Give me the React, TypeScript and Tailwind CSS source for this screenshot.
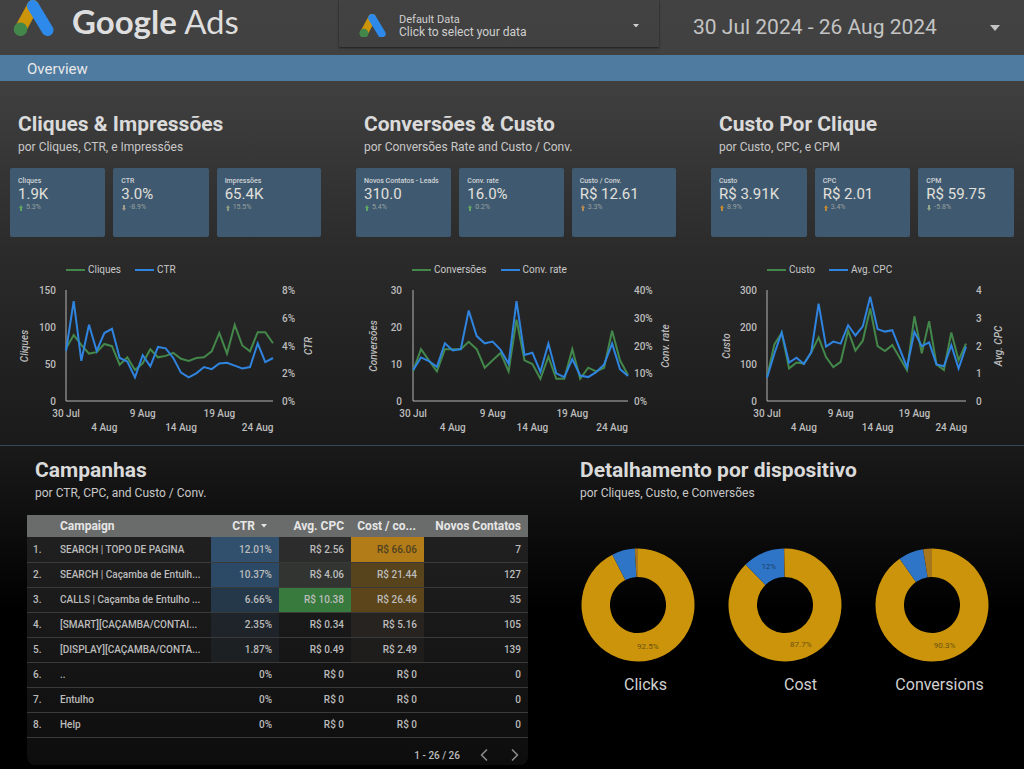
import { ChevronLeft, ChevronRight } from 'lucide-react'
import clsx from 'clsx'

type Metric = { label: string; value: string; delta: string; down?: boolean; color: string }

type Chart = {
  left: number
  right: number
  width: number
  titleX: [number, number]
  names: [string, string]
  maxLeft: number
  maxRight: number
  ticksLeft: string[]
  ticksRight: string[]
  rightTickX: number
  green: number[]
  blue: number[]
}

type Section = {
  title: string
  subtitle: string
  columns: string
  metrics: Metric[]
  chart: Chart
}

const GREEN = '#43874a'
const BLUE = '#2f84e0'

const sections: Section[] = [
  {
    title: 'Cliques & Impressões',
    subtitle: 'por Cliques, CTR, e Impressões',
    columns: 'grid-cols-[95fr_95fr_104fr]',
    metrics: [
      { label: 'Cliques', value: '1.9K', delta: '5.3%', color: 'text-[#63a562]' },
      { label: 'CTR', value: '3.0%', delta: '-8.9%', down: true, color: 'text-[#a39a8e]' },
      { label: 'Impressões', value: '65.4K', delta: '15.5%', color: 'text-[#8a9a83]' },
    ],
    chart: {
      left: 56,
      right: 263,
      width: 311,
      titleX: [18, 302],
      names: ['Cliques', 'CTR'],
      maxLeft: 150,
      maxRight: 8,
      ticksLeft: ['0', '50', '100', '150'],
      ticksRight: ['0%', '2%', '4%', '6%', '8%'],
      rightTickX: 272,
      green: [71, 89, 76, 64, 66, 77, 74, 49, 59, 42, 51, 70, 59, 61, 65, 57, 54, 58, 59, 67, 92, 64, 103, 75, 67, 93, 93, 78],
      blue: [3.6, 7.2, 2.9, 5.5, 3.6, 4.9, 5.2, 3.1, 2.85, 1.7, 3.3, 2.5, 3.9, 3.8, 3.1, 2.05, 1.7, 2, 2.45, 2.3, 2.7, 2.75, 2.55, 2.35, 2.45, 4.15, 2.8, 3.1],
    },
  },
  {
    title: 'Conversões & Custo',
    subtitle: 'por Conversões Rate and Custo / Conv.',
    columns: 'grid-cols-[95fr_104fr_104fr]',
    metrics: [
      { label: 'Novos Contatos - Leads', value: '310.0', delta: '5.4%', color: 'text-[#63a562]' },
      { label: 'Conv. rate', value: '16.0%', delta: '0.2%', color: 'text-[#63a562]' },
      { label: 'Custo / Conv.', value: 'R$ 12.61', delta: '3.3%', color: 'text-[#b58a55]' },
    ],
    chart: {
      left: 57,
      right: 272,
      width: 320,
      titleX: [21, 313],
      names: ['Conversões', 'Conv. rate'],
      maxLeft: 30,
      maxRight: 40,
      ticksLeft: ['0', '10', '20', '30'],
      ticksRight: ['0%', '10%', '20%', '30%', '40%'],
      rightTickX: 278,
      green: [8, 14, 11, 8, 14, 14, 14, 16, 14, 9, 11, 13, 8, 22, 11, 10, 6, 12, 6, 6, 14, 6, 9, 8, 9, 19, 11, 7],
      blue: [11.1, 15.7, 14.4, 12.3, 20.8, 18.2, 18.7, 32.6, 23.4, 20.8, 21.4, 18.4, 13.4, 36, 16.6, 17.4, 10.5, 20.7, 10, 8.6, 15.1, 9.2, 8.6, 10.4, 13.2, 20.7, 11.5, 9],
    },
  },
  {
    title: 'Custo Por Clique',
    subtitle: 'por Custo, CPC, e CPM',
    columns: 'grid-cols-3',
    metrics: [
      { label: 'Custo', value: 'R$ 3.91K', delta: '8.9%', color: 'text-[#c08a35]' },
      { label: 'CPC', value: 'R$ 2.01', delta: '3.4%', color: 'text-[#c08a35]' },
      { label: 'CPM', value: 'R$ 59.75', delta: '-5.8%', down: true, color: 'text-[#8fa888]' },
    ],
    chart: {
      left: 56,
      right: 255,
      width: 303,
      titleX: [19, 291],
      names: ['Custo', 'Avg. CPC'],
      maxLeft: 300,
      maxRight: 4,
      ticksLeft: ['0', '100', '200', '300'],
      ticksRight: ['0', '1', '2', '3', '4'],
      rightTickX: 265,
      green: [65, 153, 184, 88, 104, 101, 131, 172, 119, 92, 106, 190, 136, 163, 250, 148, 135, 151, 117, 83, 229, 129, 216, 99, 84, 185, 110, 155],
      blue: [0.84, 1.71, 2.47, 1.38, 1.56, 1.33, 1.75, 3.51, 1.96, 2.14, 2.07, 2.73, 2.36, 2.69, 3.76, 2.59, 2.5, 2.55, 1.88, 1.21, 2.49, 1.98, 2.11, 1.32, 1.25, 2.01, 1.17, 1.96],
    },
  },
]

const dates = ['30 Jul', '4 Aug', '9 Aug', '14 Aug', '19 Aug', '24 Aug']

const campaigns = [
  { name: 'SEARCH | TOPO DE PAGINA', ctr: '12.01%', ctrBg: 'bg-[#30506d]', cpc: 'R$ 2.56', cpcBg: 'bg-[#2b2c2b]', cost: 'R$ 66.06', costBg: 'bg-[#b27d18] text-[#503f20]', leads: '7' },
  { name: 'SEARCH | Caçamba de Entulh...', ctr: '10.37%', ctrBg: 'bg-[#2c4a66]', cpc: 'R$ 4.06', cpcBg: 'bg-[#313431]', cost: 'R$ 21.44', costBg: 'bg-[#57431c]', leads: '127' },
  { name: 'CALLS | Caçamba de Entulho ...', ctr: '6.66%', ctrBg: 'bg-[#25384a]', cpc: 'R$ 10.38', cpcBg: 'bg-[#387a3d]', cost: 'R$ 26.46', costBg: 'bg-[#5c451a]', leads: '35' },
  { name: '[SMART][CAÇAMBA/CONTAI...', ctr: '2.35%', ctrBg: 'bg-[#1e2429]', cpc: 'R$ 0.34', cpcBg: '', cost: 'R$ 5.16', costBg: 'bg-[#262320]', leads: '105' },
  { name: '[DISPLAY][CAÇAMBA/CONTA...', ctr: '1.87%', ctrBg: 'bg-[#1c2023]', cpc: 'R$ 0.49', cpcBg: '', cost: 'R$ 2.49', costBg: 'bg-[#1e1d1b]', leads: '139' },
  { name: '..', ctr: '0%', ctrBg: '', cpc: 'R$ 0', cpcBg: '', cost: 'R$ 0', costBg: '', leads: '0' },
  { name: 'Entulho', ctr: '0%', ctrBg: '', cpc: 'R$ 0', cpcBg: '', cost: 'R$ 0', costBg: '', leads: '0' },
  { name: 'Help', ctr: '0%', ctrBg: '', cpc: 'R$ 0', cpcBg: '', cost: 'R$ 0', costBg: '', leads: '0' },
]

const devices = [
  { name: 'Clicks', slices: [92.5, 6.6, 0.9], labels: ['92.5%'], captionClass: 'pl-4' },
  { name: 'Cost', slices: [87.7, 12, 0.3], labels: ['87.7%', '12%'], captionClass: 'pl-8' },
  { name: 'Conversions', slices: [90.3, 7.2, 2.5], labels: ['90.3%'], captionClass: 'pl-4' },
]

const sliceColors = ['#cb940a', '#2e75c8', '#a8761b']

function AdsLogo({ className }: { className: string }) {
  return (
    <svg viewBox="0 0 41 36" className={className} aria-hidden="true">
      <path d="M20 6 7.5 29" stroke="#cb940a" strokeWidth="12" strokeLinecap="round" />
      <path d="M20 6 34.500 30" stroke="#2e8aea" strokeWidth="12" strokeLinecap="round" />
      <circle cx="7.500" cy="29.300" r="6.800" fill="#43874a" />
    </svg>
  )
}

function Caret({ className }: { className: string }) {
  return (
    <svg viewBox="0 0 10 6" className={className} aria-hidden="true">
      <path d="M0 0h10L5 6z" fill="currentColor" />
    </svg>
  )
}

function Trend({ down, className }: { down?: boolean; className: string }) {
  return (
    <svg viewBox="0 0 4 6" className={clsx('mr-[3px] h-[6px] w-[4px]', className)} aria-hidden="true">
      <path d={down ? 'M1 0h2v3h1L2 6 0 3h1z' : 'M1 6h2V3h1L2 0 0 3h1z'} fill="currentColor" />
    </svg>
  )
}

function Heading({ title, subtitle }: { title: string; subtitle: string }) {
  return (
    <div>
      <h2 className="text-[21px] leading-6 font-bold text-[#dadada]">{title}</h2>
      <p className="mt-[3px] text-xs leading-4 text-[#c8c8c8]">{subtitle}</p>
    </div>
  )
}

function MetricCard({ metric }: { metric: Metric }) {
  return (
    <div className="h-[69px] overflow-hidden rounded-[2px] bg-[#3f5a70] px-2 pt-[9px] whitespace-nowrap">
      <div className="text-[7px] leading-2 font-medium text-[#cfd3d6]">{metric.label}</div>
      <div className="text-[15px] leading-[18px] text-[#e2e0dc]">{metric.value}</div>
      <div className="flex items-center pl-px text-[7px] leading-[9px] text-[#9aa09f]">
        <Trend down={metric.down} className={metric.color} />
        {metric.delta}
      </div>
    </div>
  )
}

function LineChart({ chart }: { chart: Chart }) {
  const top = 9
  const bottom = 120
  const step = (chart.right - chart.left) / (chart.green.length - 1)
  const points = (values: number[], max: number) =>
    values
      .map((v, i) => `${(chart.left + i * step).toFixed(1)},${(bottom - (v / max) * (bottom - top)).toFixed(1)}`)
      .join(' ')
  const tickY = (i: number, count: number) => bottom - (i / (count - 1)) * (bottom - top) + 4

  return (
    <div>
      <div className="flex gap-[14px] pl-14 text-[10px] leading-3 text-[#c8c8c8]">
        {chart.names.map((name, i) => (
          <div key={name} className="flex items-center gap-[3px]">
            <span className={clsx('h-[2px] w-[19px]', i === 0 ? 'bg-[#43874a]' : 'bg-[#2f84e0]')} />
            {name}
          </div>
        ))}
      </div>
      <svg viewBox={`0 0 ${chart.width} 154`} className="mt-[5px] block w-full text-[10px] font-medium" fill="#bdbdbd">
        {chart.ticksLeft.map((t, i) => (
          <text key={t} x={46} y={tickY(i, chart.ticksLeft.length)} textAnchor="end">{t}</text>
        ))}
        {chart.ticksRight.map((t, i) => (
          <text key={t} x={chart.rightTickX} y={tickY(i, chart.ticksRight.length)}>{t}</text>
        ))}
        {dates.map((d, i) => (
          <text key={d} x={chart.left + i * 5 * step} y={i % 2 ? 150 : 136} textAnchor="middle">{d}</text>
        ))}
        {chart.titleX.map((x, i) => (
          <text key={x} transform={`translate(${x} 65) rotate(-90)`} textAnchor="middle" fontStyle="italic">
            {chart.names[i]}
          </text>
        ))}
        <path d={`M${chart.left} ${top}V${bottom}H${chart.right}`} fill="none" stroke="#b5b5b5" />
        <polyline points={points(chart.green, chart.maxLeft)} fill="none" stroke={GREEN} strokeWidth="2" />
        <polyline points={points(chart.blue, chart.maxRight)} fill="none" stroke={BLUE} strokeWidth="2" />
      </svg>
    </div>
  )
}

function polar(radius: number, share: number) {
  const a = share * Math.PI * 2
  return `${(57 + radius * Math.sin(a)).toFixed(2)} ${(57 - radius * Math.cos(a)).toFixed(2)}`
}

function Donut({ slices, labels }: { slices: number[]; labels: string[] }) {
  const outer = 56.5
  const inner = 28
  const starts = slices.map((_, i) => slices.slice(0, i).reduce((a, b) => a + b, 0) / 100)
  return (
    <svg viewBox="0 0 114 114" className="w-[114px] text-[8px]">
      {slices.map((s, i) => {
        const from = starts[i]
        const to = from + s / 100
        const large = s > 50 ? 1 : 0
        return (
          <path
            key={i}
            fill={sliceColors[i]}
            d={`M${polar(outer, from)}A${outer} ${outer} 0 ${large} 1 ${polar(outer, to)}L${polar(inner, to)}A${inner} ${inner} 0 ${large} 0 ${polar(inner, from)}Z`}
          />
        )
      })}
      {labels.map((label, i) => {
        const a = (starts[i] + slices[i] / 200) * Math.PI * 2
        return (
          <text key={label} x={57 + 42 * Math.sin(a)} y={60 - 42 * Math.cos(a)} textAnchor="middle" fill={i ? '#1d3f66' : '#6b5212'}>
            {label}
          </text>
        )
      })}
    </svg>
  )
}

export default function App() {
  return (
    <div className="min-h-screen bg-[linear-gradient(#424242_0,#404040_80px,#2b2b2b_250px,#1a1a1a_445px,#000_610px)] font-['Roboto',sans-serif]">
      {/* Header */}
      <header className="grid h-[55px] grid-cols-[339fr_320fr_365fr] text-[#cfcfcf]">
        <div className="flex items-start pl-[13px]">
          <AdsLogo className="w-[41px]" />
          <span className="pl-[18px] font-['Lato',sans-serif] text-[33px] leading-[42px] text-[#dedede]">
            <span className="font-bold">Google</span> Ads
          </span>
        </div>
        <button className="flex h-[47px] items-center pt-1 pr-5 pl-5 text-left text-xs leading-[13px] shadow-[0_1px_2px_#1c1c1c]">
          <AdsLogo className="w-[27px]" />
          <span className="flex-1 pl-[13px]">
            <span className="block text-[11px]">Default Data</span>
            <span className="block">Click to select your data</span>
          </span>
          <Caret className="w-[6px]" />
        </button>
        <button className="flex items-center justify-between pr-6 pl-[34px] text-[21px] text-[#c4c4c4]">
          30 Jul 2024 - 26 Aug 2024
          <Caret className="w-[10px]" />
        </button>
      </header>

      <nav className="flex bg-[#4f7ba0] px-[27px]">
        <a href="#overview" className="pt-[2px] text-[15px] leading-6 text-[#e8e8e8]">Overview</a>
      </nav>

      {/* Metrics and trends */}
      <main>
        <div className="grid grid-cols-[311fr_320fr_303fr] gap-[35px] border-b border-[#33495a] px-[10px] pt-[31px] pb-[10px]">
          {sections.map((section) => (
            <section key={section.title} className="min-w-0">
              <div className="pl-2">
                <Heading title={section.title} subtitle={section.subtitle} />
              </div>
              <div className={clsx('mt-[13px] mb-[27px] grid gap-2', section.columns)}>
                {section.metrics.map((metric) => (
                  <MetricCard key={metric.label} metric={metric} />
                ))}
              </div>
              <LineChart chart={section.chart} />
            </section>
          ))}
        </div>

        <div className="grid grid-cols-[501fr_441fr] gap-9 pt-3 pr-[19px] pl-[27px]">
          {/* Campaigns */}
          <section className="min-w-0">
            <div className="pl-2">
              <Heading title="Campanhas" subtitle="por CTR, CPC, and Custo / Conv." />
            </div>
            <div className="mt-[14px] rounded-b-lg bg-linear-to-b from-[#222222] to-[#0d0d0d]">
              <table className="w-full table-fixed text-right text-[10px] font-medium whitespace-nowrap text-[#bcbcbc]">
                <thead className="bg-[#6a6c6b] text-[12px] leading-[22px] text-[#e6e6e6]">
                  <tr>
                    <th className="w-[33px]" aria-label="#" />
                    <th className="text-left">Campaign</th>
                    <th className="w-[68px] pr-3">
                      <button className="inline-flex items-center gap-[6px]">
                        CTR <Caret className="w-[6px]" />
                      </button>
                    </th>
                    <th className="w-[72px] pr-[7px]">Avg. CPC</th>
                    <th className="w-[73px] pr-2">Cost / co...</th>
                    <th className="w-[104px] pr-[7px]">Novos Contatos</th>
                  </tr>
                </thead>
                <tbody>
                  {campaigns.map((row, i) => (
                    <tr key={row.name} className="h-[25px] border-b border-[#3a3a3a]">
                      <td className="pl-[6px] text-left">{i + 1}.</td>
                      <td className="text-left">{row.name}</td>
                      <td className={clsx('pr-[7px]', row.ctrBg)}>{row.ctr}</td>
                      <td className={clsx('pr-[7px]', row.cpcBg)}>{row.cpc}</td>
                      <td className={clsx('pr-[7px]', row.costBg)}>{row.cost}</td>
                      <td className="pr-[7px]">{row.leads}</td>
                    </tr>
                  ))}
                </tbody>
              </table>
              <div className="flex h-[27px] items-center justify-end pt-2 pr-[3px] text-[10px] font-medium text-[#bcbcbc]">
                1 - 26 / 26
                <button aria-label="Previous page" className="ml-[14px] text-[#8a8a8a]">
                  <ChevronLeft className="h-5 w-5" />
                </button>
                <button aria-label="Next page" className="ml-[11px] text-[#8a8a8a]">
                  <ChevronRight className="h-5 w-5" />
                </button>
              </div>
            </div>
          </section>

          {/* Devices */}
          <section className="min-w-0">
            <div className="pl-4">
              <Heading title="Detalhamento por dispositivo" subtitle="por Cliques, Custo, e Conversões" />
            </div>
            <div className="mt-[47px] grid grid-cols-3">
              {devices.map((device) => (
                <figure key={device.name} className="flex flex-col items-center">
                  <Donut slices={device.slices} labels={device.labels} />
                  <figcaption className={clsx('mt-[13px] text-base leading-5 text-[#d0d0d0]', device.captionClass)}>
                    {device.name}
                  </figcaption>
                </figure>
              ))}
            </div>
          </section>
        </div>
      </main>
    </div>
  )
}
